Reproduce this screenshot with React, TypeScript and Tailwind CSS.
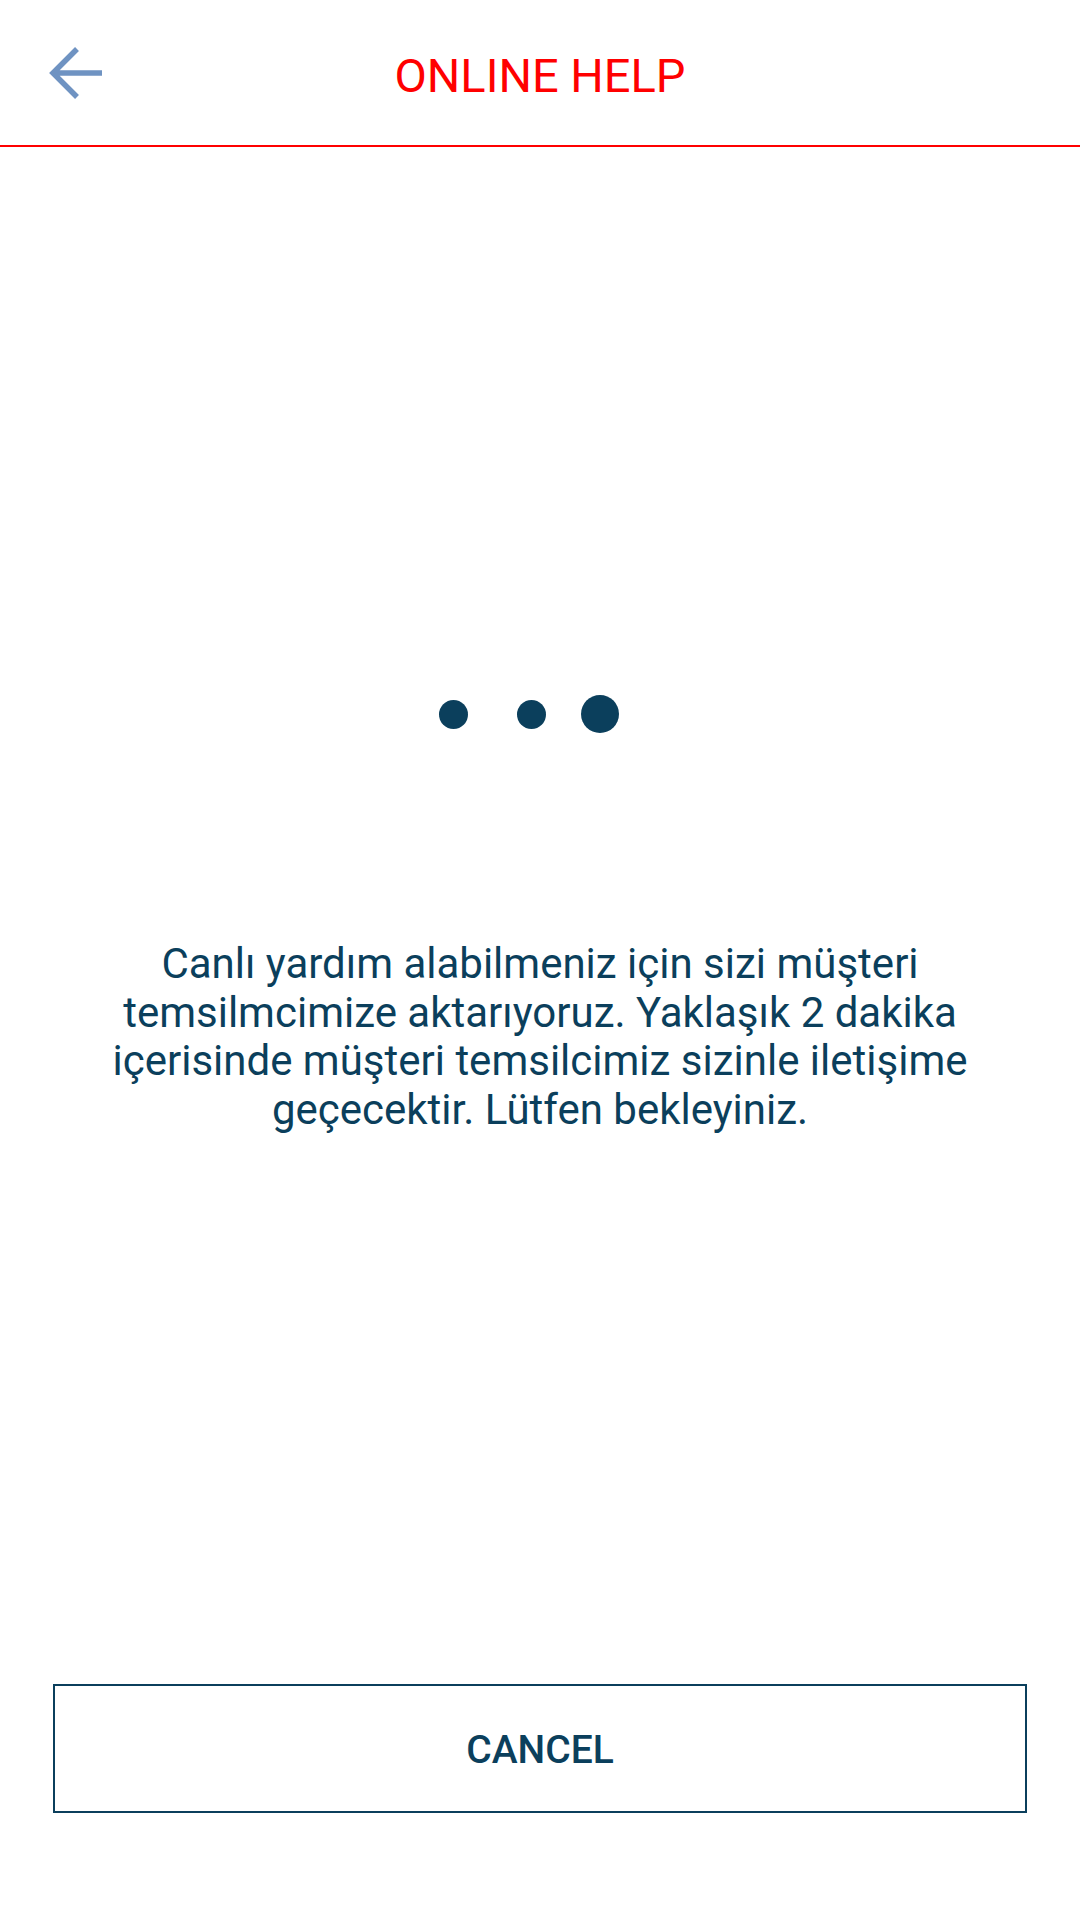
import React from "react";

const lines = [
  "Canlı yardım alabilmeniz için sizi müşteri",
  "temsilmcimize aktarıyoruz. Yaklaşık 2 dakika",
  "içerisinde müşteri temsilcimiz sizinle iletişime",
  "geçecektir. Lütfen bekleyiniz.",
];

const BackArrow = () => (
  <svg width="60" height="60" viewBox="0 0 60 60" fill="none">
    <path
      d="M58 29H9M33 5L9 29l24 24"
      stroke="#6f93c2"
      strokeWidth="5.5"
      strokeLinecap="butt"
      strokeLinejoin="miter"
    />
  </svg>
);

export default function App() {
  return (
    <div className="w-[1080px] h-[1920px] bg-white flex flex-col font-['Roboto',sans-serif]">
      {/* header */}
      <div className="relative h-[147px] border-b-2 border-[#ff0000] flex items-center justify-center">
        <button className="absolute left-[44px] top-[44px]">
          <BackArrow />
        </button>
        <h1 className="text-[47px] leading-none text-[#ff0000] mt-[6px]">ONLINE HELP</h1>
      </div>

      {/* loading dots */}
      <div className="mt-[548px] h-[38px] flex items-center justify-center">
        <div className="w-[29px] h-[29px] rounded-full bg-[#0b3f5c] ml-[-22px]" />
        <div className="w-[29px] h-[29px] rounded-full bg-[#0b3f5c] ml-[49px]" />
        <div className="w-[38px] h-[38px] rounded-full bg-[#0b3f5c] ml-[35px]" />
      </div>

      {/* message */}
      <p className="mt-[207px] text-center text-[42px] leading-[48.5px] text-[#0b3f5c]">
        {lines.map((l, i) => (
          <span key={i} className="block">
            {l}
          </span>
        ))}
      </p>

      {/* cancel */}
      <button className="mt-[550px] mx-[53px] h-[129px] border-2 border-[#0b3f5c] text-[39px] font-medium text-[#0b3f5c] pt-[3px]">
        CANCEL
      </button>
    </div>
  );
}
